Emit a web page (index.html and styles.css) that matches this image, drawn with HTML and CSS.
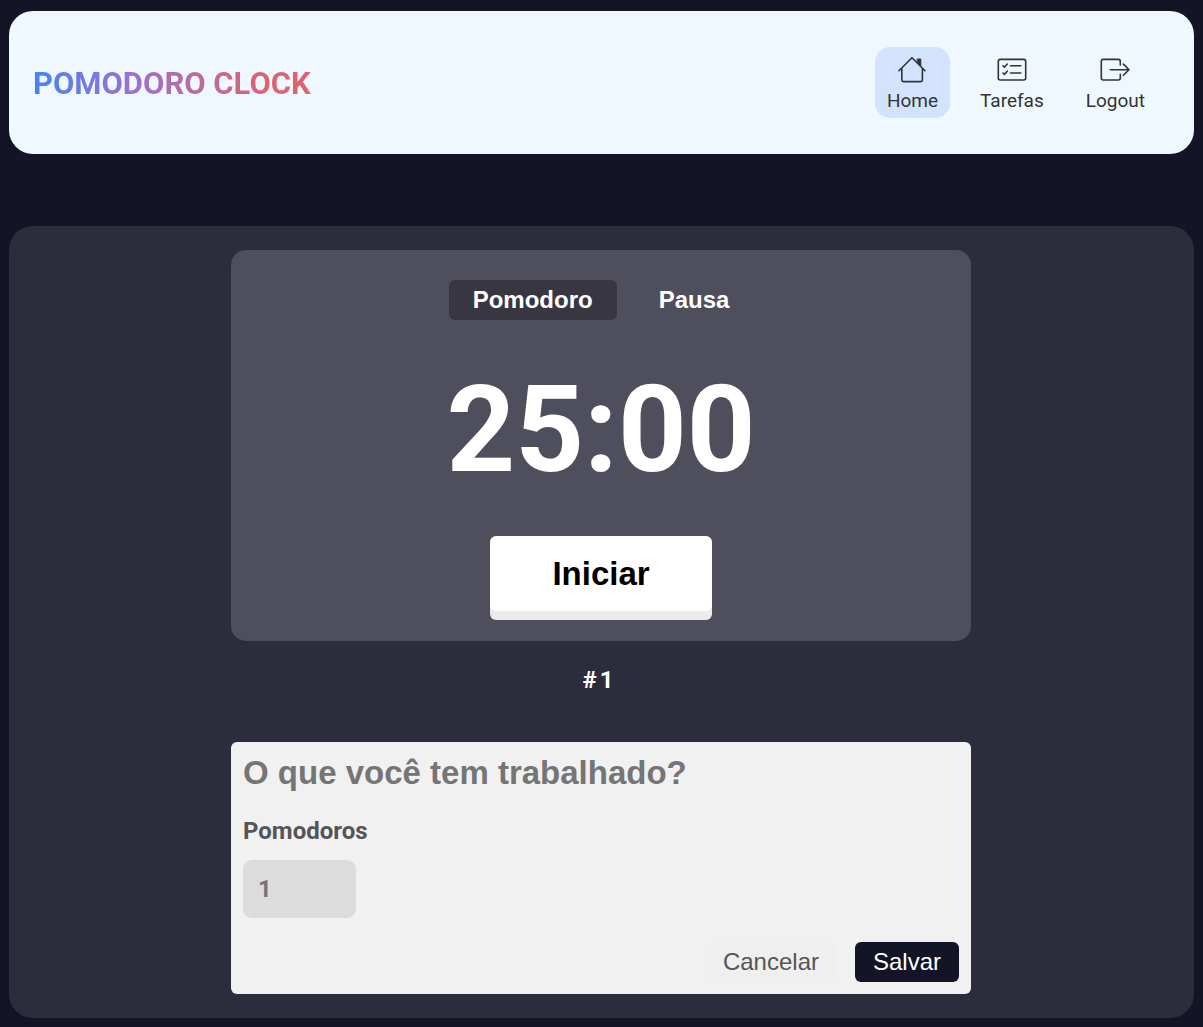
FILE: index.html
```html
<!DOCTYPE html>
<html lang="pt-BR">
<head>
  <meta charset="utf-8">
  <meta name="viewport" content="width=device-width, initial-scale=1">
  <title>Pomodoro Clock</title>
  <link rel="stylesheet" href="styles.css">
</head>
<body>
  <header class="header">
    <h1 class="logo">POMODORO CLOCK</h1>
    <nav class="nav">
      <a class="nav-link nav-link-active" href="#home">
        <svg class="nav-icon" viewBox="0 0 28 28" stroke-width="1.6" aria-hidden="true">
          <path d="M1 14.700 14 1.700 27 14.700M3.800 12.500V24Q3.800 25.600 5.400 25.600H22.800Q24.400 25.600 24.400 24V12.500"/>
          <path class="solid" d="M19.500 3H22.800V10L19.500 6.700Z"/>
        </svg>
        <span>Home</span>
      </a>
      <a class="nav-link" href="#tarefas">
        <svg class="nav-icon nav-icon-wide" viewBox="0 0 30 28" stroke-width="1.6" aria-hidden="true">
          <rect x="1.300" y="3.400" width="27.400" height="20.600" rx="2"/>
          <path d="M13.500 9.700H23.800M13.500 17H23.800M6 9.800 7.400 11.200 10.300 8M6 17 7.400 18.400 10.300 15.200"/>
        </svg>
        <span>Tarefas</span>
      </a>
      <a class="nav-link" href="#logout">
        <svg class="nav-icon nav-icon-wide" viewBox="0 0 30 28" stroke-width="1.6" aria-hidden="true">
          <path d="M20.300 9V5.400Q20.300 3.400 18.300 3.400H3.300Q1.300 3.400 1.300 5.400V22Q1.300 24 3.300 24H18.300Q20.300 24 20.300 22V18.200M10.300 13.700H29M23.400 8.100 29 13.700 23.400 19.300"/>
        </svg>
        <span>Logout</span>
      </a>
    </nav>
  </header>

  <main class="main">
    <section class="timer">
      <div class="modes">
        <button class="mode mode-active" type="button">Pomodoro</button>
        <button class="mode" type="button">Pausa</button>
      </div>
      <div class="time">25:00</div>
      <button class="start" type="button">Iniciar</button>
    </section>

    <p class="round"><span>#</span> <span>1</span></p>

    <form class="task">
      <input class="task-name" type="text" aria-label="Tarefa" placeholder="O que você tem trabalhado?">
      <label class="task-label" for="count">Pomodoros</label>
      <input class="task-count" id="count" type="number" min="1" placeholder="1">
      <div class="actions">
        <button class="action" type="button">Cancelar</button>
        <button class="action action-save" type="submit">Salvar</button>
      </div>
    </form>
  </main>
</body>
</html>
```
FILE: styles.css
```css
* {
  box-sizing: border-box;
  margin: 0;
}

body {
  display: flex;
  flex-direction: column;
  gap: 72px;
  min-height: 100vh;
  padding: 11px 9px 9px;
  background: #131425;
  font-family: Roboto, sans-serif;
}

button,
input {
  border: 0;
  font-family: "Liberation Sans", Arial, sans-serif;
}

button {
  cursor: pointer;
}

.header {
  display: flex;
  align-items: center;
  justify-content: space-between;
  padding: 36px 37px 36px 24px;
  border-radius: 24px;
  background: #f0f8ff;
}

.logo {
  padding-top: 2px;
  background: linear-gradient(74deg, #4285f4 0, #9b72cb 102px, #d96570 227px);
  background-clip: text;
  -webkit-background-clip: text;
  color: transparent;
  font-size: 31px;
  font-weight: 700;
  line-height: 36px;
}

.nav {
  display: flex;
  gap: 18px;
}

.nav-link {
  display: flex;
  flex-direction: column;
  align-items: center;
  gap: 4px;
  padding: 9px 12px 4px;
  border-radius: 15px;
  color: #333;
  font-size: 19px;
  line-height: 26px;
  text-decoration: none;
}

.nav-link-active {
  background: #d3e3fd;
}

.nav-icon {
  width: 28px;
  height: 28px;
  fill: none;
  stroke: #333;
  stroke-linecap: round;
  stroke-linejoin: round;
}

.nav-icon-wide {
  width: 30px;
}

.nav-icon .solid {
  fill: #333;
  stroke-width: 1;
}

.main {
  display: flex;
  flex: 1;
  flex-direction: column;
  align-items: center;
  padding: 24px 25px 24px 24px;
  border-radius: 24px;
  background: #2c2d3c;
}

.timer {
  display: flex;
  flex-direction: column;
  align-items: center;
  width: 100%;
  max-width: 740px;
  padding: 30px 24px;
  border-radius: 15px;
  background: #4f4e5c;
}

.modes {
  display: flex;
  gap: 18px;
}

.mode {
  height: 40px;
  padding: 0 24px;
  border-radius: 6px;
  background: transparent;
  color: #fff;
  font-size: 24px;
  font-weight: 700;
}

.mode-active {
  background: #383741;
}

.time {
  margin: 38px 0 34px;
  color: #fff;
  font-size: 120px;
  font-weight: 700;
  line-height: 144px;
}

.start {
  width: 222px;
  height: 75px;
  border-radius: 6px;
  background: #fff;
  box-shadow: 0 9px 0 #ebebeb;
  color: #000;
  font-size: 33px;
  font-weight: 700;
}

.round {
  display: flex;
  gap: 3px;
  margin: 25px 0 47px;
  padding-right: 6px;
  color: #fff;
  font-size: 24px;
  font-weight: 700;
  line-height: 29px;
}

.task {
  display: flex;
  flex-direction: column;
  align-items: flex-start;
  width: 100%;
  max-width: 740px;
  padding: 12px;
  border-radius: 6px;
  background: #f1f1f1;
}

.task-name {
  width: 100%;
  height: 38px;
  padding: 0;
  background: transparent;
  color: #555;
  font-size: 33px;
  font-weight: 700;
}

.task-name::placeholder,
.task-count::placeholder {
  color: #757575;
}

.task-label {
  margin: 25px 0 14px;
  color: #555;
  font-size: 24px;
  font-weight: 700;
  line-height: 29px;
}

.task-count {
  width: 113px;
  height: 58px;
  padding: 0 15px;
  border-radius: 9px;
  background: #dcdcdc;
  color: #555;
  font-family: Roboto, sans-serif;
  font-size: 24px;
  font-weight: 700;
}

.actions {
  display: flex;
  gap: 18px;
  align-self: flex-end;
  margin-top: 24px;
}

.action {
  height: 40px;
  padding: 0 18px;
  border-radius: 6px;
  background: #efefef;
  color: #555;
  font-size: 24px;
}

.action-save {
  background: #131425;
  color: #fff;
}
```
